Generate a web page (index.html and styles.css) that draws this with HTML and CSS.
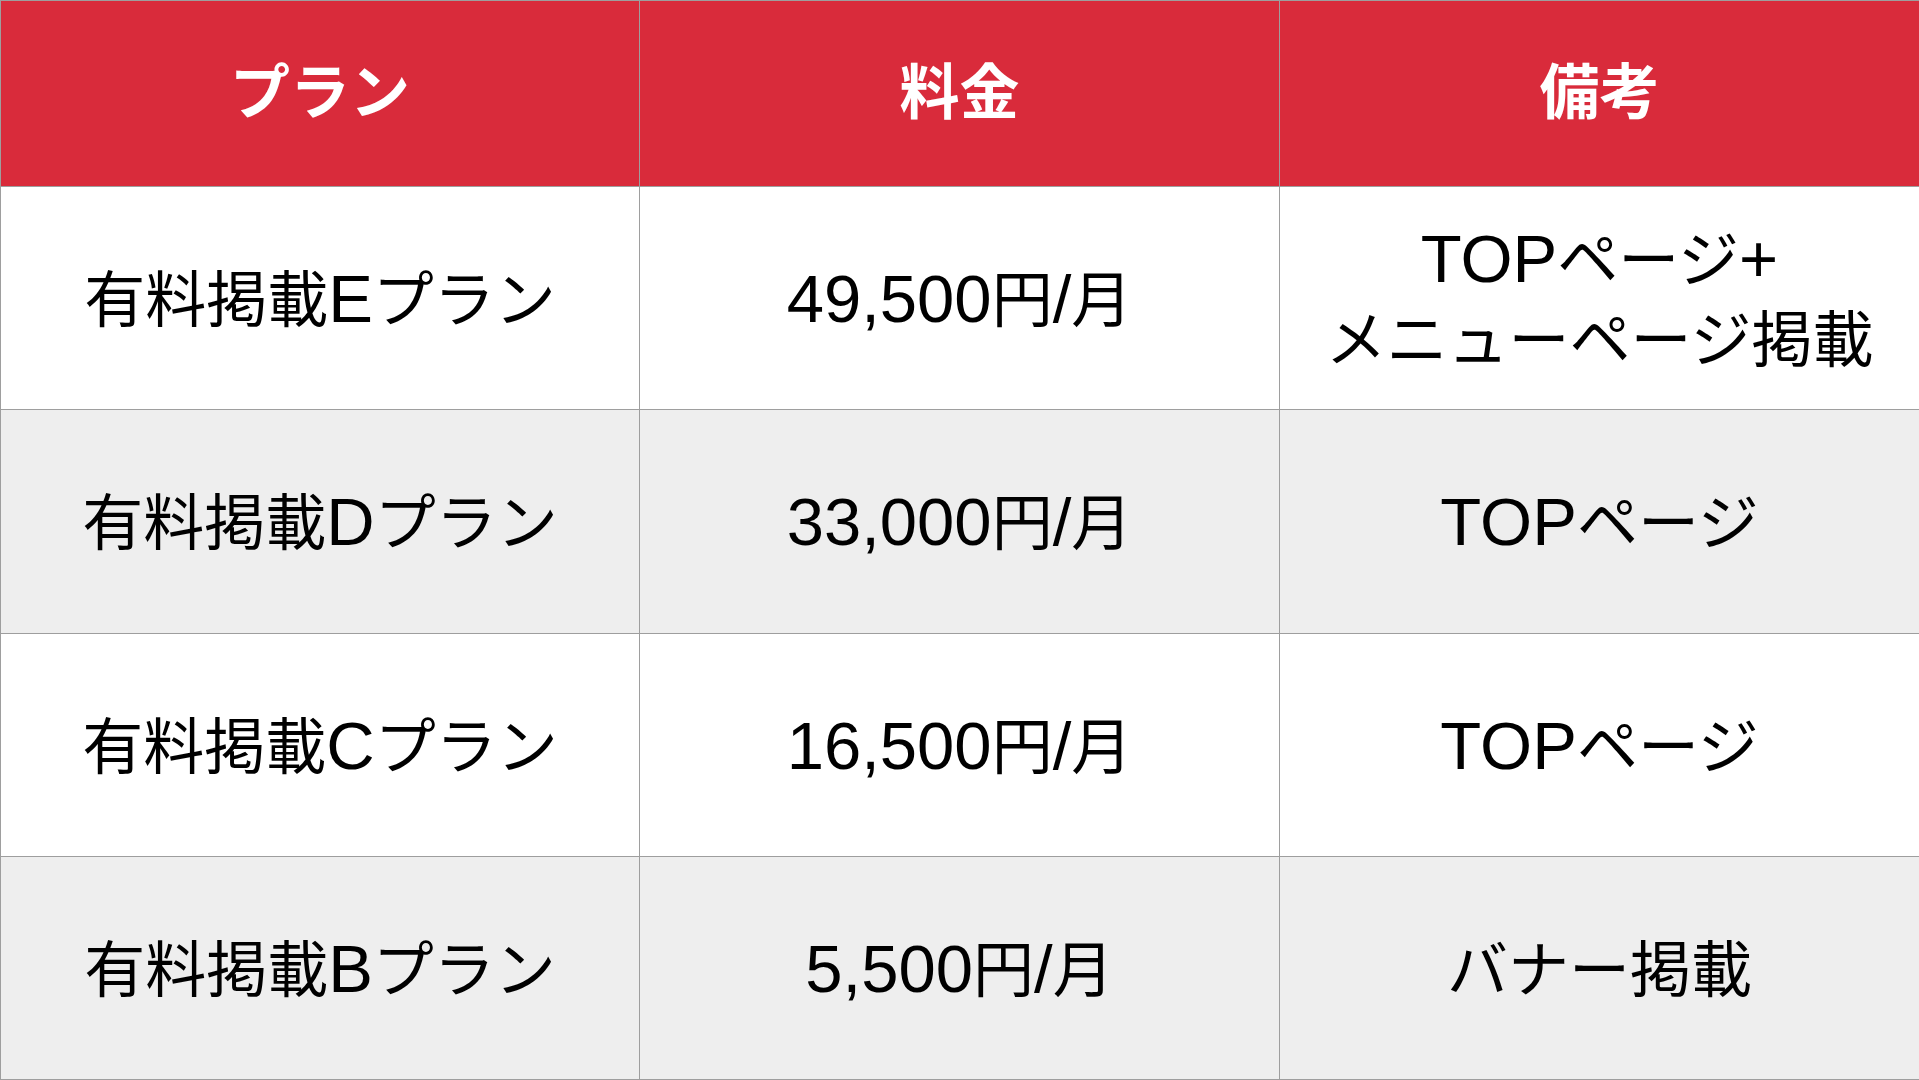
FILE: index.html
```html
<!DOCTYPE html>
<html lang="ja">
<head>
<meta charset="utf-8">
<title>料金プラン</title>
<link rel="stylesheet" href="styles.css">
</head>
<body>
<table class="plans">
  <colgroup>
    <col class="col-plan">
    <col class="col-price">
    <col class="col-note">
  </colgroup>
  <thead>
    <tr class="head-row">
      <th>プラン</th>
      <th>料金</th>
      <th>備考</th>
    </tr>
  </thead>
  <tbody>
    <tr class="row row-white">
      <td>有料掲載<span class="en">E</span>プラン</td>
      <td><span class="en">49,500</span>円<span class="en">/</span>月</td>
      <td><span class="en">TOP</span>ページ<span class="en">+</span><br>メニューページ掲載</td>
    </tr>
    <tr class="row row-gray">
      <td>有料掲載<span class="en">D</span>プラン</td>
      <td><span class="en">33,000</span>円<span class="en">/</span>月</td>
      <td><span class="en">TOP</span>ページ</td>
    </tr>
    <tr class="row row-white">
      <td>有料掲載<span class="en">C</span>プラン</td>
      <td><span class="en">16,500</span>円<span class="en">/</span>月</td>
      <td><span class="en">TOP</span>ページ</td>
    </tr>
    <tr class="row row-gray">
      <td>有料掲載<span class="en">B</span>プラン</td>
      <td><span class="en">5,500</span>円<span class="en">/</span>月</td>
      <td>バナー掲載</td>
    </tr>
  </tbody>
</table>
</body>
</html>
```
FILE: styles.css
```css
html, body {
  margin: 0;
  padding: 0;
  background: #ffffff;
}

body {
  font-family: "Liberation Sans", "Noto Sans CJK JP", sans-serif;
  color: #000000;
}

.plans {
  width: 1919px;
  height: 1080px;
  border-collapse: collapse;
  table-layout: fixed;
}

.col-plan { width: 639px; }
.col-price { width: 640px; }
.col-note { width: 640px; }

.plans th,
.plans td {
  border: 1px solid #9e9e9e;
  text-align: center;
  vertical-align: middle;
  padding: 0;
}

.head-row {
  height: 186px;
}

.head-row th {
  background: #d92b3b;
  color: #ffffff;
  font-weight: 700;
  font-size: 60px;
  line-height: 1.2;
}

.row {
  height: 223px;
}

.row td {
  font-size: 61px;
  line-height: 80px;
  padding-top: 6px;
}

.en {
  font-size: 67px;
  line-height: 1;
}

.row-white td { background: #ffffff; }
.row-gray td { background: #eeeeee; }
```
